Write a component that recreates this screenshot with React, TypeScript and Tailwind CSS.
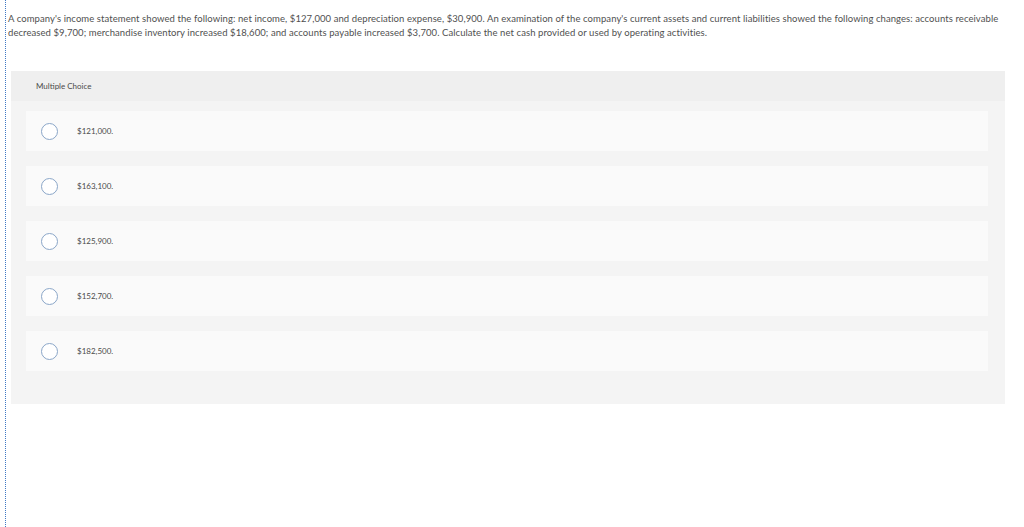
import React from 'react';

const choices = ['$121,000.', '$163,100.', '$125,900.', '$152,700.', '$182,500.'];

export default function App() {
  return (
    <div className="h-[527px] w-[1024px] bg-white pl-[5px] font-['Lato',sans-serif] text-[#3a3a3a]">
      <div className="h-full border-l border-dotted border-[#3f78c4] pl-[2px] pr-[20px]">
        {/* Question */}
        <p className="whitespace-nowrap pt-[12px] text-[9.5px] leading-[14px] tracking-[0.008em] text-[#505050]">
          A company&apos;s income statement showed the following: net income, $127,000 and depreciation expense, $30,900. An
          examination of the company&apos;s current assets and current liabilities showed the following changes: accounts receivable
          <br />
          decreased $9,700; merchandise inventory increased $18,600; and accounts payable increased $3,700. Calculate the net
          cash provided or used by operating activities.
        </p>

        {/* Answer panel */}
        <div className="ml-[3px] mt-[31px] w-[994px] bg-[#f4f4f4]">
          <div className="flex h-[30px] items-center bg-[#efefef] pl-[25px] text-[8px] text-[#4a4a4a]">
            Multiple Choice
          </div>
          <div className="flex flex-col gap-[15px] pb-[33px] pl-[15px] pr-[17px] pt-[10px]">
            {choices.map((c) => (
              <div key={c} className="flex h-[40px] items-center bg-[#fafafa]">
                <span className="ml-[15px] h-[17px] w-[17px] rounded-full border border-[#8aa6c8] bg-white" />
                <span className="ml-[19px] text-[8px] text-[#4a4a4a]">{c}</span>
              </div>
            ))}
          </div>
        </div>
      </div>
    </div>
  );
}
